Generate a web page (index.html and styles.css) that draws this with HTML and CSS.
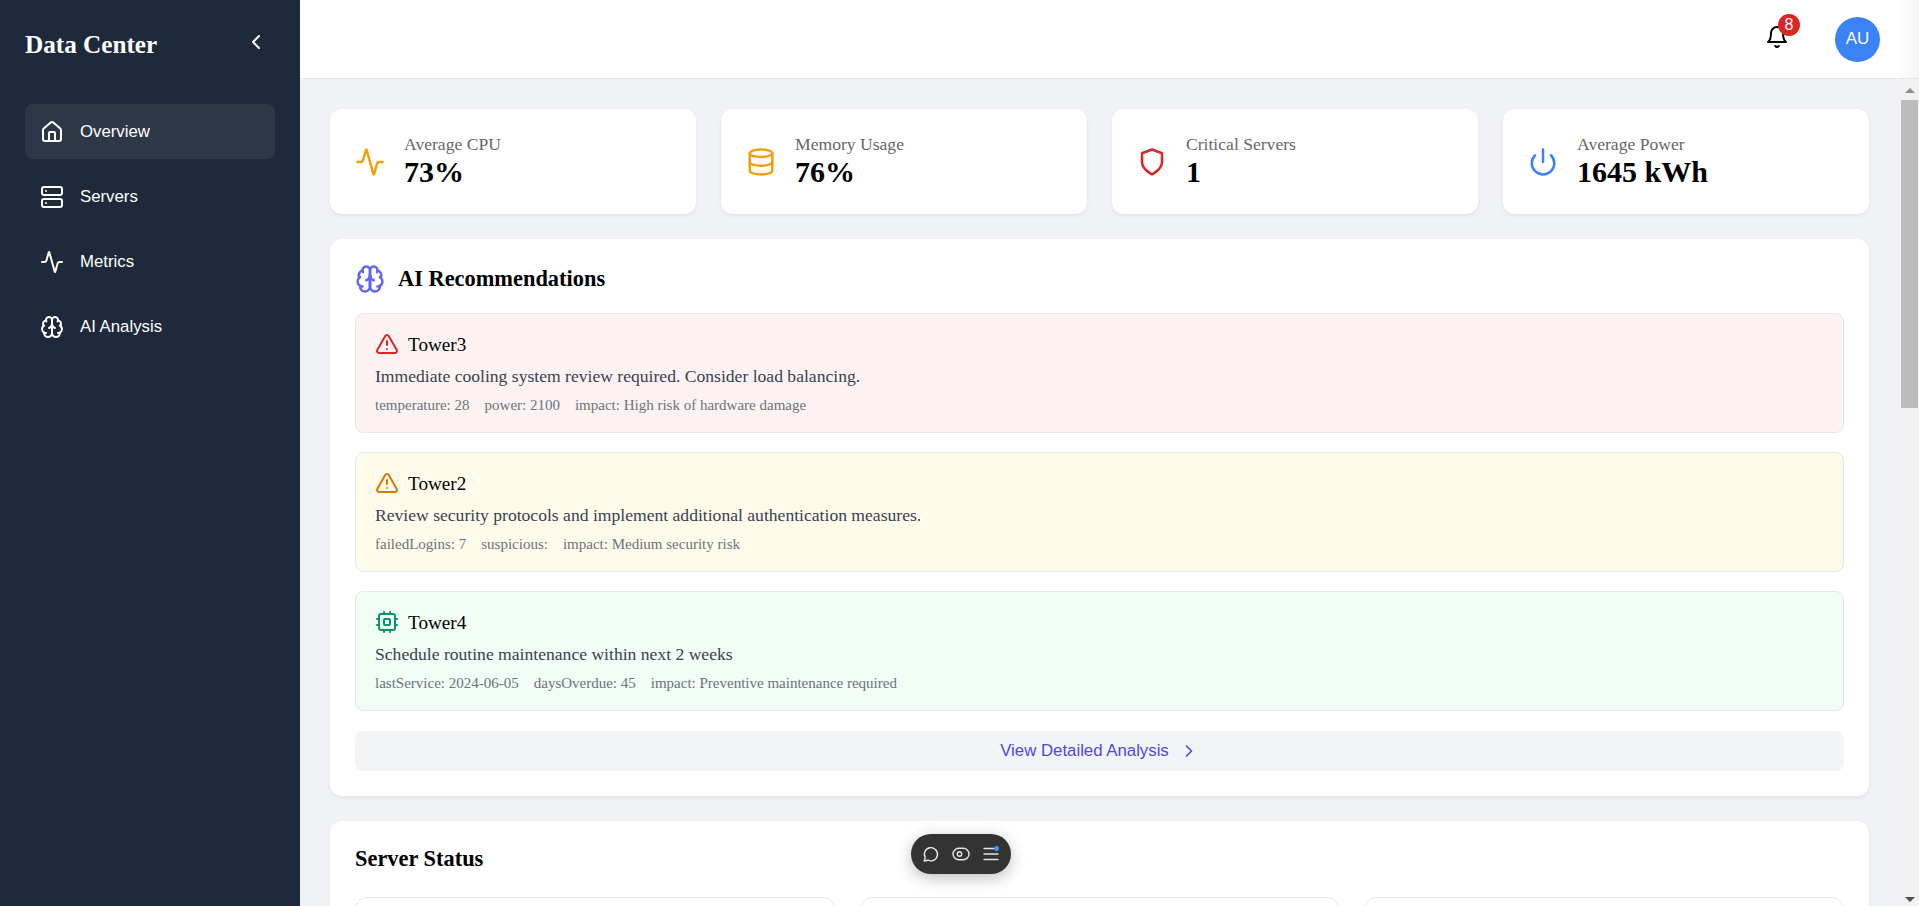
FILE: index.html
```html
<!DOCTYPE html>
<html lang="en">

<head>
    <meta charset="UTF-8">
    <meta name="viewport" content="width=device-width, initial-scale=1.0">
    <title>Data Center</title>
    <link rel="stylesheet" href="styles.css">
</head>

<body>
    <aside class="sidebar">
        <div class="sidebar-head">
            <h1 class="brand">Data Center</h1>
            <button class="collapse-btn" type="button" aria-label="Collapse">
                <svg class="icon" viewBox="0 0 24 24"><path d="m15 18-6-6 6-6"/></svg>
            </button>
        </div>
        <nav class="nav">
            <a class="nav-item active" href="#">
                <svg class="icon" viewBox="0 0 24 24"><path d="M15 21v-8a1 1 0 0 0-1-1h-4a1 1 0 0 0-1 1v8"/><path d="M3 10a2 2 0 0 1 .709-1.528l7-5.999a2 2 0 0 1 2.582 0l7 5.999A2 2 0 0 1 21 10v9a2 2 0 0 1-2 2H5a2 2 0 0 1-2-2z"/></svg>
                <span>Overview</span>
            </a>
            <a class="nav-item" href="#">
                <svg class="icon" viewBox="0 0 24 24"><rect x="2" y="2" width="20" height="8" rx="2"/><rect x="2" y="14" width="20" height="8" rx="2"/><path d="M6 6h.01"/><path d="M6 18h.01"/></svg>
                <span>Servers</span>
            </a>
            <a class="nav-item" href="#">
                <svg class="icon" viewBox="0 0 24 24"><path d="M22 12h-2.48a2 2 0 0 0-1.93 1.46l-2.35 8.36a.25.25 0 0 1-.48 0L9.24 2.18a.25.25 0 0 0-.48 0l-2.35 8.36A2 2 0 0 1 4.49 12H2"/></svg>
                <span>Metrics</span>
            </a>
            <a class="nav-item" href="#">
                <svg class="icon" viewBox="0 0 24 24"><path d="M12 5a3 3 0 1 0-5.997.125 4 4 0 0 0-2.526 5.77 4 4 0 0 0 .556 6.588A4 4 0 1 0 12 18Z"/><path d="M12 5a3 3 0 1 1 5.997.125 4 4 0 0 1 2.526 5.77 4 4 0 0 1-.556 6.588A4 4 0 1 1 12 18Z"/><path d="M15 13a4.5 4.5 0 0 1-3-4 4.5 4.5 0 0 1-3 4"/><path d="M12 18V9"/><path d="M17.6 6.5a3 3 0 0 0 .4-1.4"/><path d="M6 5.1a3 3 0 0 0 .4 1.4"/><path d="M3.5 10.9a4 4 0 0 1 .6-.4"/><path d="M19.9 10.5a4 4 0 0 1 .6.4"/><path d="M6 18a4 4 0 0 1-2-.5"/><path d="M20 17.5a4 4 0 0 1-2 .5"/></svg>
                <span>AI Analysis</span>
            </a>
        </nav>
    </aside>

    <div class="page">
        <header class="topbar">
            <div class="bell">
                <svg class="icon" viewBox="0 0 24 24"><path d="M6 8a6 6 0 0 1 12 0c0 7 3 9 3 9H3s3-2 3-9"/><path d="M10.3 21a1.94 1.94 0 0 0 3.4 0"/></svg>
                <span class="badge">8</span>
            </div>
            <div class="avatar">AU</div>
        </header>

        <div class="page-body">
            <main class="main">
                <section class="stats">
                    <div class="card stat">
                        <svg class="icon stat-icon orange" viewBox="0 0 24 24"><path d="M22 12h-2.48a2 2 0 0 0-1.93 1.46l-2.35 8.36a.25.25 0 0 1-.48 0L9.24 2.18a.25.25 0 0 0-.48 0l-2.35 8.36A2 2 0 0 1 4.49 12H2"/></svg>
                        <div>
                            <p class="stat-label">Average CPU</p>
                            <p class="stat-value">73%</p>
                        </div>
                    </div>
                    <div class="card stat">
                        <svg class="icon stat-icon orange" viewBox="0 0 24 24"><ellipse cx="12" cy="5" rx="9" ry="3"/><path d="M3 5v14a9 3 0 0 0 18 0V5"/><path d="M3 12a9 3 0 0 0 18 0"/></svg>
                        <div>
                            <p class="stat-label">Memory Usage</p>
                            <p class="stat-value">76%</p>
                        </div>
                    </div>
                    <div class="card stat">
                        <svg class="icon stat-icon red" viewBox="0 0 24 24"><path d="M12 22s8-4 8-10V5l-8-3-8 3v7c0 6 8 10 8 10z"/></svg>
                        <div>
                            <p class="stat-label">Critical Servers</p>
                            <p class="stat-value">1</p>
                        </div>
                    </div>
                    <div class="card stat">
                        <svg class="icon stat-icon blue" viewBox="0 0 24 24"><path d="M12 2v10"/><path d="M18.4 6.6a9 9 0 1 1-12.77.04"/></svg>
                        <div>
                            <p class="stat-label">Average Power</p>
                            <p class="stat-value">1645 kWh</p>
                        </div>
                    </div>
                </section>

                <section class="card panel">
                    <div class="panel-head">
                        <svg class="icon stat-icon indigo" viewBox="0 0 24 24"><path d="M12 5a3 3 0 1 0-5.997.125 4 4 0 0 0-2.526 5.77 4 4 0 0 0 .556 6.588A4 4 0 1 0 12 18Z"/><path d="M12 5a3 3 0 1 1 5.997.125 4 4 0 0 1 2.526 5.77 4 4 0 0 1-.556 6.588A4 4 0 1 1 12 18Z"/><path d="M15 13a4.5 4.5 0 0 1-3-4 4.5 4.5 0 0 1-3 4"/><path d="M12 18V9"/><path d="M17.6 6.5a3 3 0 0 0 .4-1.4"/><path d="M6 5.1a3 3 0 0 0 .4 1.4"/><path d="M3.5 10.9a4 4 0 0 1 .6-.4"/><path d="M19.9 10.5a4 4 0 0 1 .6.4"/><path d="M6 18a4 4 0 0 1-2-.5"/><path d="M20 17.5a4 4 0 0 1-2 .5"/></svg>
                        <h2>AI Recommendations</h2>
                    </div>

                    <div class="rec rec-high">
                        <div class="rec-title">
                            <svg class="icon red" viewBox="0 0 24 24"><path d="m21.73 18-8-14a2 2 0 0 0-3.48 0l-8 14A2 2 0 0 0 4 21h16a2 2 0 0 0 1.73-3"/><path d="M12 9v4"/><path d="M12 17h.01"/></svg>
                            <h3>Tower3</h3>
                        </div>
                        <p class="rec-text">Immediate cooling system review required. Consider load balancing.</p>
                        <div class="rec-meta">
                            <span>temperature: 28</span>
                            <span>power: 2100</span>
                            <span>impact: High risk of hardware damage</span>
                        </div>
                    </div>

                    <div class="rec rec-medium">
                        <div class="rec-title">
                            <svg class="icon amber" viewBox="0 0 24 24"><path d="m21.73 18-8-14a2 2 0 0 0-3.48 0l-8 14A2 2 0 0 0 4 21h16a2 2 0 0 0 1.73-3"/><path d="M12 9v4"/><path d="M12 17h.01"/></svg>
                            <h3>Tower2</h3>
                        </div>
                        <p class="rec-text">Review security protocols and implement additional authentication measures.</p>
                        <div class="rec-meta">
                            <span>failedLogins: 7</span>
                            <span>suspicious:</span>
                            <span>impact: Medium security risk</span>
                        </div>
                    </div>

                    <div class="rec rec-low">
                        <div class="rec-title">
                            <svg class="icon green" viewBox="0 0 24 24"><rect x="4" y="4" width="16" height="16" rx="2"/><rect x="9" y="9" width="6" height="6" rx="1"/><path d="M15 2v2"/><path d="M15 20v2"/><path d="M2 15h2"/><path d="M2 9h2"/><path d="M20 15h2"/><path d="M20 9h2"/><path d="M9 2v2"/><path d="M9 20v2"/></svg>
                            <h3>Tower4</h3>
                        </div>
                        <p class="rec-text">Schedule routine maintenance within next 2 weeks</p>
                        <div class="rec-meta">
                            <span>lastService: 2024-06-05</span>
                            <span>daysOverdue: 45</span>
                            <span>impact: Preventive maintenance required</span>
                        </div>
                    </div>

                    <button class="detail-btn" type="button">
                        View Detailed Analysis
                        <svg class="icon" viewBox="0 0 24 24"><path d="m9 18 6-6-6-6"/></svg>
                    </button>
                </section>

                <section class="card panel">
                    <h2 class="panel-title">Server Status</h2>
                    <div class="server-grid">
                        <div class="server-card"></div>
                        <div class="server-card"></div>
                        <div class="server-card"></div>
                    </div>
                </section>
            </main>

            <div class="scrollbar">
                <div class="sb-btn sb-up"><span></span></div>
                <div class="sb-thumb"></div>
                <div class="sb-track"></div>
                <div class="sb-btn sb-down"><span></span></div>
            </div>
        </div>
    </div>

    <div class="float-bar">
        <svg viewBox="0 0 18 18"><path d="M2.2 16l1-3.4A6.6 6.6 0 1 1 6 15.2z"/></svg>
        <svg viewBox="0 0 18 18"><rect x="1" y="3.2" width="16" height="11.6" rx="5.8"/><circle cx="7.5" cy="9" r="2.2"/></svg>
        <span class="float-menu">
            <svg viewBox="0 0 18 18"><path d="M2 3.5h10"/><path d="M2 9h14"/><path d="M2 14.5h14"/></svg>
            <span class="float-dot"></span>
        </span>
    </div>
</body>
</html>
```

FILE: styles.css
```css
/* Global Styles */
* {
    margin: 0;
    padding: 0;
    box-sizing: border-box;
}

body {
    font-family: "Liberation Serif", serif;
    background-color: #f0f2f5;
    color: #000;
    display: flex;
    height: 100vh;
    overflow: hidden;
}

.icon {
    width: 24px;
    height: 24px;
    flex-shrink: 0;
    fill: none;
    stroke: currentColor;
    stroke-width: 2;
    stroke-linecap: round;
    stroke-linejoin: round;
}

.orange { color: #f59e0b; }
.red { color: #dc2626; }
.blue { color: #3b82f6; }
.indigo { color: #6366f1; }
.amber { color: #d97706; }
.green { color: #059669; }

/* Sidebar */
.sidebar {
    width: 300px;
    flex-shrink: 0;
    background-color: #1e293b;
    color: #fff;
    padding: 30px 25px;
}

.sidebar-head {
    display: flex;
    justify-content: space-between;
    align-items: flex-start;
    height: 74px;
}

.brand {
    font-size: 25.2px;
    font-weight: bold;
    margin-top: 1px;
}

.collapse-btn {
    background: none;
    border: none;
    color: #fff;
    padding: 0 7px 0 0;
    cursor: pointer;
}

.nav {
    display: flex;
    flex-direction: column;
    gap: 10px;
}

.nav-item {
    display: flex;
    align-items: center;
    gap: 16px;
    height: 55px;
    padding: 0 15px;
    border-radius: 8px;
    color: #fff;
    text-decoration: none;
    font-family: "Liberation Sans", sans-serif;
    font-size: 16.8px;
}

.nav-item.active {
    background-color: #2d3748;
}

/* Top bar */
.page {
    flex: 1;
    min-width: 0;
    display: flex;
    flex-direction: column;
}

.topbar {
    height: 79px;
    flex-shrink: 0;
    background: linear-gradient(to right, #fff calc(100% - 22px), #f5f5f5);
    border-bottom: 1px solid #e5e7eb;
    display: flex;
    justify-content: flex-end;
    align-items: center;
    gap: 46px;
    padding-right: 39px;
}

.bell {
    position: relative;
    width: 24px;
    height: 24px;
    margin-bottom: 4px;
}

.badge {
    position: absolute;
    top: -11px;
    right: -11px;
    width: 22px;
    height: 22px;
    border-radius: 50%;
    background-color: #dc2626;
    color: #fff;
    font-family: "Liberation Sans", sans-serif;
    font-size: 16px;
    line-height: 22px;
    text-align: center;
}

.avatar {
    width: 45px;
    height: 45px;
    border-radius: 50%;
    background-color: #3b82f6;
    color: #fff;
    font-family: "Liberation Sans", sans-serif;
    font-size: 17px;
    display: flex;
    align-items: center;
    justify-content: center;
}

/* Main area */
.page-body {
    flex: 1;
    min-height: 0;
    display: flex;
}

.main {
    flex: 1;
    min-width: 0;
    overflow: hidden;
    padding: 30px 32px 0 30px;
}

/* Scrollbar, drawn by hand since headless windows hide the real one */
.scrollbar {
    width: 18px;
    flex-shrink: 0;
    display: flex;
    flex-direction: column;
    background-color: #f1f1f1;
}

.sb-btn {
    height: 21px;
    flex-shrink: 0;
    padding-left: 4px;
}

.sb-btn span {
    display: block;
    width: 0;
    height: 0;
    border-left: 5px solid transparent;
    border-right: 5px solid transparent;
}

.sb-up {
    padding-top: 9px;
}

.sb-up span {
    border-bottom: 5px solid #8c8c8c;
}

.sb-down {
    padding-top: 12px;
}

.sb-down span {
    border-top: 5px solid #505050;
}

.sb-thumb {
    width: 17px;
    height: 308px;
    flex-shrink: 0;
    background-color: #bcbcbc;
}

.sb-track {
    flex: 1;
}

.card {
    background-color: #fff;
    border-radius: 12px;
    box-shadow: 0 2px 4px rgba(0, 0, 0, 0.06);
}

.stats {
    display: grid;
    grid-template-columns: repeat(4, 1fr);
    gap: 25px;
    margin-bottom: 25px;
}

.stat {
    display: flex;
    align-items: center;
    gap: 19px;
    height: 105px;
    padding: 0 25px;
}

.stat-icon {
    width: 30px;
    height: 30px;
}

.stat-label {
    font-size: 17.6px;
    color: #666;
}

.stat-value {
    font-size: 30px;
    font-weight: bold;
}

.panel {
    padding: 25px;
    margin-bottom: 25px;
}

.panel-head {
    display: flex;
    align-items: center;
    gap: 13px;
    margin-bottom: 19px;
}

.panel-head h2 {
    font-size: 22.4px;
}

.panel-title {
    font-size: 22.4px;
    margin-bottom: 25px;
}

/* Recommendations */
.rec {
    height: 120px;
    padding: 18px 19px;
    margin-bottom: 19px;
    border: 1px solid #e5e7eb;
    border-radius: 8px;
}

.rec-high { background-color: #fdf2f2; }
.rec-medium { background-color: #fffbeb; }

.rec-low {
    background-color: #f2fdf5;
    margin-bottom: 20px;
}

.rec-title {
    display: flex;
    align-items: center;
    gap: 9px;
    margin-bottom: 10px;
}

.rec-title h3 {
    font-size: 19.2px;
    font-weight: normal;
    margin-top: 1px;
}

.rec-text {
    font-size: 17.6px;
    color: #374151;
    margin-bottom: 10px;
}

.rec-meta {
    display: flex;
    gap: 15px;
    font-size: 15px;
    color: #6b7280;
}

.detail-btn {
    width: 100%;
    height: 40px;
    border: none;
    border-radius: 8px;
    background-color: #f3f4f6;
    color: #4f46e5;
    font-family: "Liberation Sans", sans-serif;
    font-size: 16.8px;
    display: flex;
    align-items: center;
    justify-content: center;
    gap: 10px;
    cursor: pointer;
}

.detail-btn .icon {
    width: 20px;
    height: 20px;
}

/* Server cards */
.server-grid {
    display: grid;
    grid-template-columns: repeat(3, 1fr);
    gap: 25px;
}

.server-card {
    height: 300px;
    border: 1px solid #e5e7eb;
    border-radius: 12px;
}

/* Floating toolbar */
.float-bar {
    position: fixed;
    left: 911px;
    bottom: 32px;
    width: 100px;
    height: 40px;
    border-radius: 20px;
    background-color: #333;
    box-shadow: 0 4px 16px rgba(0, 0, 0, 0.25);
    display: flex;
    align-items: center;
    justify-content: center;
    gap: 12px;
}

.float-bar svg {
    display: block;
    width: 18px;
    height: 18px;
    fill: none;
    stroke: #e5e5e5;
    stroke-width: 1.4;
    stroke-linecap: round;
    stroke-linejoin: round;
}

.float-menu {
    position: relative;
}

.float-dot {
    position: absolute;
    top: 1px;
    right: 1px;
    width: 5px;
    height: 5px;
    border-radius: 50%;
    background-color: #3b9cff;
}
```
